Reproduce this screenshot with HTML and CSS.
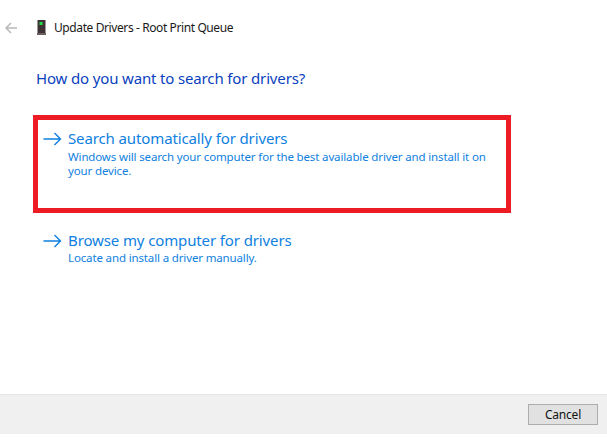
FILE: index.html
```html
<!DOCTYPE html>
<html lang="en">
<head>
  <meta charset="utf-8">
  <title>Update Drivers - Root Print Queue</title>
  <link rel="stylesheet" href="styles.css">
</head>
<body>
  <div class="wizard">
    <div class="title-bar">
      <svg class="back-icon" width="12" height="12" viewBox="0 0 12 12">
        <path d="M6 1 L1 6 L6 11 M1 6 H12" fill="none" stroke="#b8b8b8" stroke-width="1.5"/>
      </svg>
      <svg class="device-icon" width="9" height="15" viewBox="0 0 9 15">
        <rect x="0.5" y="0" width="8" height="13" fill="#3f3234"/>
        <rect x="0" y="13" width="9" height="2" fill="#6b5f60"/>
        <rect x="2.5" y="2" width="3" height="3" fill="#22e04a"/>
      </svg>
      <span class="title-text">Update Drivers - Root Print Queue</span>
    </div>
    <div class="content">
      <h1>How do you want to search for drivers?</h1>
      <div class="highlight">
        <div class="option">
          <svg class="arrow" width="19" height="14" viewBox="0 0 19 14">
            <path d="M11.5 1 L17.5 7 L11.5 13 M0.5 7 H17.5" fill="none" stroke="#0f7fe0" stroke-width="1.4"/>
          </svg>
          <div class="option-text">
            <div class="option-title">Search automatically for drivers</div>
            <div class="option-desc">Windows will search your computer for the best available driver and install it on your device.</div>
          </div>
        </div>
      </div>
      <div class="option option-plain">
        <svg class="arrow" width="19" height="14" viewBox="0 0 19 14">
          <path d="M11.5 1 L17.5 7 L11.5 13 M0.5 7 H17.5" fill="none" stroke="#0f7fe0" stroke-width="1.4"/>
        </svg>
        <div class="option-text">
          <div class="option-title">Browse my computer for drivers</div>
          <div class="option-desc">Locate and install a driver manually.</div>
        </div>
      </div>
    </div>
    <div class="footer">
      <button class="cancel-btn" type="button">Cancel</button>
    </div>
  </div>
</body>
</html>
```

FILE: styles.css
```css
* {
  box-sizing: border-box;
  margin: 0;
  padding: 0;
}
html, body {
  width: 607px;
  height: 438px;
  overflow: hidden;
  background: #fff;
}
body {
  font-family: "Noto Sans", "Open Sans", sans-serif;
}
.wizard {
  display: flex;
  flex-direction: column;
  height: 434px;
}
.title-bar {
  display: flex;
  align-items: center;
  height: 17px;
  margin-top: 19px;
  padding-left: 5px;
}
.back-icon {
  margin-right: 20px;
}
.device-icon {
  margin-right: 8px;
}
.title-text {
  font-size: 12px;
  color: #1a1a1a;
  letter-spacing: -0.4px;
}
.content {
  flex: 1;
  padding: 32px 0 0 33px;
}
h1 {
  font-size: 15px;
  font-weight: 400;
  color: #0a3fbd;
  line-height: 20px;
  padding-left: 3px;
  letter-spacing: -0.15px;
}
.highlight {
  width: 478px;
  height: 98px;
  margin-top: 27px;
  border: 5px solid #ed1c24;
  padding: 8px 0 0 5px;
}
.highlight .option-desc {
  padding-top: 2px;
}
.option {
  display: flex;
  align-items: flex-start;
}
.option-plain {
  margin-top: 17px;
  padding-left: 10px;
}
.arrow {
  margin-top: 4px;
  margin-right: 6px;
  flex: none;
}
.option-title {
  font-size: 15px;
  line-height: 20px;
  color: #0f7fe0;
  letter-spacing: -0.12px;
}
.option-desc {
  width: 430px;
  font-size: 11.5px;
  line-height: 14px;
  padding-top: 1px;
  color: #0f7fe0;
  letter-spacing: -0.14px;
}
.footer {
  display: flex;
  justify-content: flex-end;
  height: 40px;
  padding: 9px 9px 0 0;
  background: #f0f0f0;
  border-top: 1px solid #e6e6e6;
}
.cancel-btn {
  width: 70px;
  height: 21px;
  background: #e1e1e1;
  border: 1px solid #adadad;
  font-family: inherit;
  font-size: 12px;
  color: #111;
  letter-spacing: -0.2px;
}
```
